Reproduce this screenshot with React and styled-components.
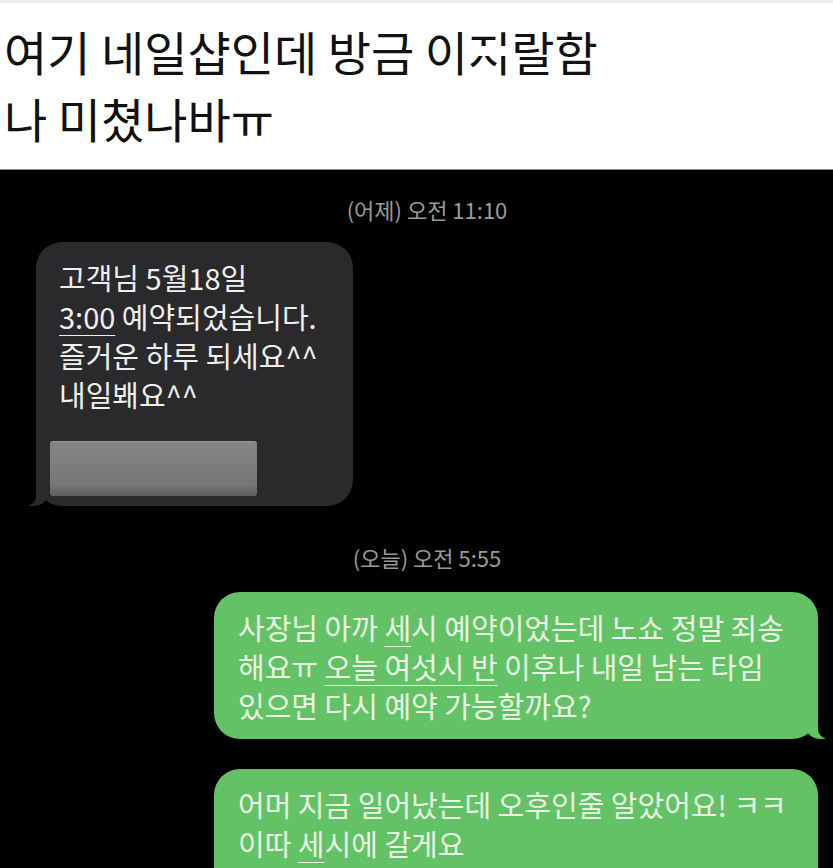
import React from 'react';
import styled, { createGlobalStyle, css } from 'styled-components';

const GlobalStyle = createGlobalStyle`
  html, body {
    margin: 0;
    padding: 0;
    background: #000;
  }
  body {
    font-family: 'Noto Sans CJK KR', 'Noto Sans', sans-serif;
  }
`;

const Page = styled.div`
  width: 833px;
  height: 868px;
  overflow: hidden;
  display: flex;
  flex-direction: column;
`;

const Caption = styled.header`
  flex-shrink: 0;
  background: #fff;
  border-top: 3px solid #ececec;
  border-bottom: 1px solid #8a8a8a;
  padding: 14px 0 0 4px;
  height: 152px;
  box-sizing: content-box;
`;

const CaptionLine = styled.div`
  font-size: 47px;
  line-height: 67px;
  color: #111;
  white-space: nowrap;
`;

// 지 is partly blanked out with a white strip
const Censored = styled.span`
  position: relative;
  &::after {
    content: '';
    position: absolute;
    left: 0;
    right: 0;
    top: 44%;
    height: 14%;
    background: #fff;
  }
`;

const Chat = styled.main`
  flex: 1;
  background: #000;
  padding: 26px 15px 0 36px;
  display: flex;
  flex-direction: column;
`;

const Stamp = styled.div`
  text-align: center;
  font-size: 22px;
  line-height: 26px;
  color: #9a9a9a;
  margin: ${(p) => p.$top || 0}px 0 0 0;
`;

const Bubble = styled.div`
  position: relative;
  font-size: 29px;
  line-height: 39px;
  border-radius: 26px;
  padding: 16px 24px 14px 23px;
  white-space: nowrap;

  &::before,
  &::after {
    content: '';
    position: absolute;
    bottom: 0;
    height: 24px;
  }

  ${(p) =>
    p.$out
      ? css`
          align-self: flex-end;
          width: 556px;
          background: #63c266;
          color: #eaf6e4;
          padding-left: 24px;
          &::before {
            right: -7px;
            width: 20px;
            background: #63c266;
            border-bottom-left-radius: 16px 14px;
          }
          &::after {
            right: -26px;
            width: 26px;
            background: #000;
            border-bottom-left-radius: 10px;
          }
        `
      : css`
          align-self: flex-start;
          width: 270px;
          background: #2a2a2c;
          color: #efefef;
          padding-bottom: 10px;
          &::before {
            left: -7px;
            width: 20px;
            background: #2a2a2c;
            border-bottom-right-radius: 16px 14px;
          }
          &::after {
            left: -26px;
            width: 26px;
            background: #000;
            border-bottom-right-radius: 10px;
          }
        `}
`;

const Link = styled.span`
  text-decoration: underline;
  text-decoration-thickness: 1px;
  text-underline-offset: 6px;
`;

const Preview = styled.div`
  width: 207px;
  height: 55px;
  margin: 27px 0 0 -9px;
  border-radius: 3px;
  background: linear-gradient(#868686, #767676 80%, #5e5e5e);
  box-shadow: inset 0 1px 0 rgba(255, 255, 255, 0.15);
`;

export default function App() {
  return (
    <Page>
      <GlobalStyle />
      <Caption>
        <CaptionLine>
          여기 네일샵인데 방금 이<Censored>지</Censored>랄함
        </CaptionLine>
        <CaptionLine>나 미쳤나바ㅠ</CaptionLine>
      </Caption>
      <Chat>
        <Stamp>(어제) 오전 11:10</Stamp>
        <Bubble style={{ marginTop: 20 }}>
          고객님 5월18일
          <br />
          <Link>3:00</Link> 예약되었습니다.
          <br />
          즐거운 하루 되세요^^
          <br />
          내일봬요^^
          <Preview />
        </Bubble>
        <Stamp $top={38}>(오늘) 오전 5:55</Stamp>
        <Bubble $out style={{ marginTop: 22 }}>
          사장님 아까 <Link>세</Link>시 예약이었는데 노쇼 정말 죄송
          <br />
          해요ㅠ <Link>오늘 여섯시 반</Link> 이후나 내일 남는 타임
          <br />
          있으면 다시 예약 가능할까요?
        </Bubble>
        <Bubble $out style={{ marginTop: 30 }}>
          어머 지금 일어났는데 오후인줄 알았어요! ㅋㅋ
          <br />
          이따 <Link>세</Link>시에 갈게요
          <br />
          &nbsp;
        </Bubble>
      </Chat>
    </Page>
  );
}
